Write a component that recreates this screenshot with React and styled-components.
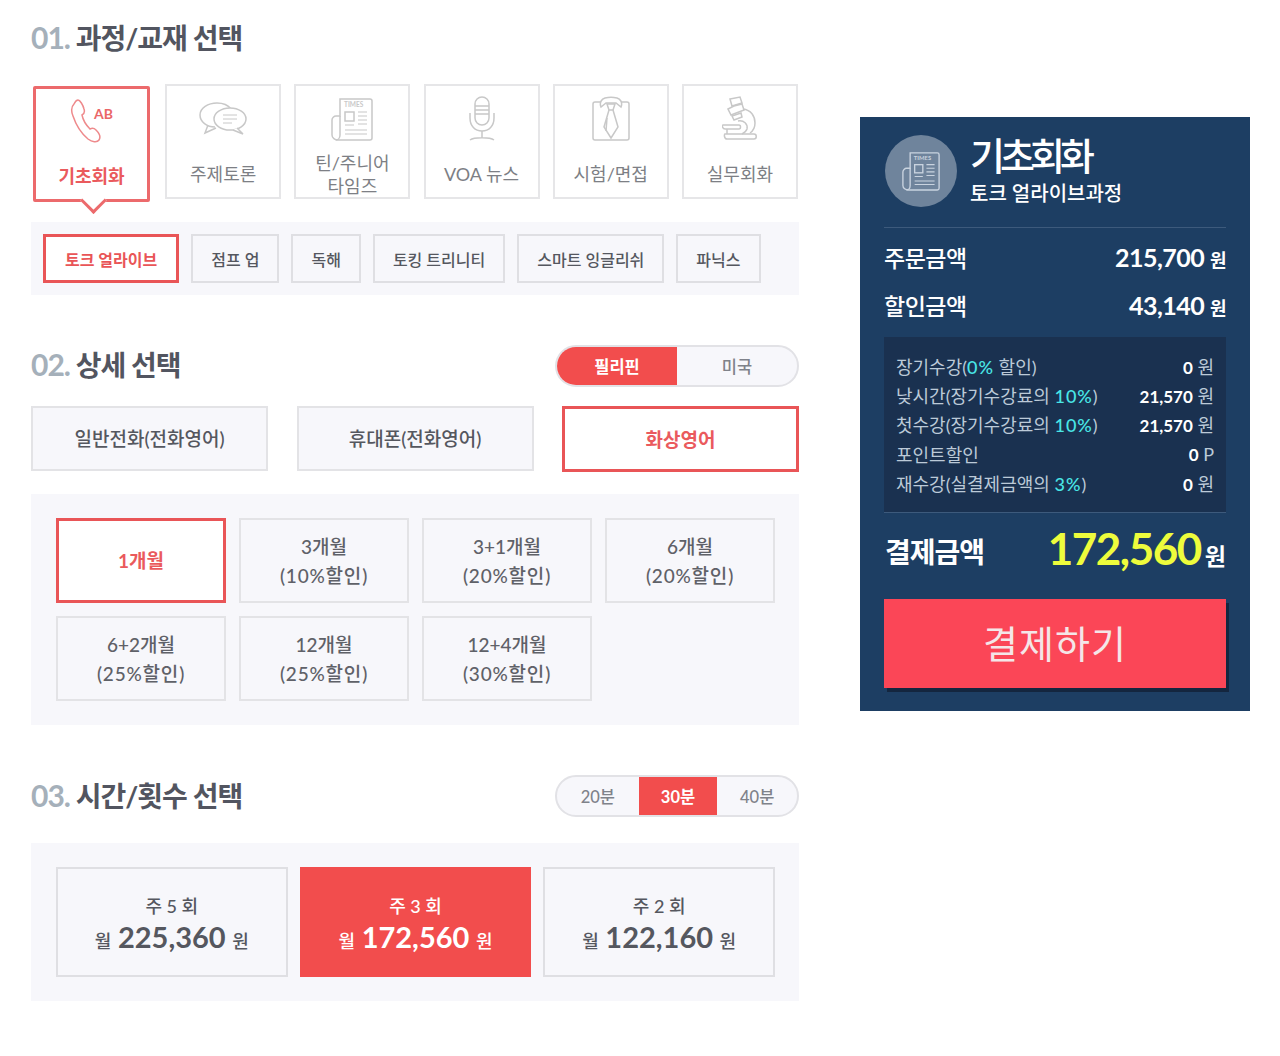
import React from "react";
import styled, { createGlobalStyle, css } from "styled-components";

const RED = "#f24d4d";
const FONT = `Lato, "Noto Sans CJK KR", sans-serif`;

const GlobalStyle = createGlobalStyle`
  html, body { margin: 0; padding: 0; background: #fff; }
  body { font-family: ${FONT}; color: #4a4d57; }
  * { box-sizing: border-box; }
`;

const PhoneIcon = ({ color }) => (
  <svg width="46" height="48" viewBox="0 0 46 48" fill="none" stroke={color} strokeWidth="1.5">
    <path d="M5 7 C2 10 2 14 4 19 C7 28 13 37 19 42 C23 45 28 46 30 43 C32 40 30 36 27 33 C25 31 23 31 21 32 C18 29 14 23 13 18 C15 17 16 15 15 12 C14 8 11 3 9 3 C7 3 6 5 5 7 Z" />
    <text x="25" y="22" fontSize="14" fontWeight="700" fill="#ea6668" stroke="none" fontFamily="Lato, sans-serif">AB</text>
  </svg>
);

const ChatIcon = ({ color }) => (
  <svg width="48" height="36" viewBox="0 0 48 36" fill="none" stroke={color} strokeWidth="1.5">
    <path d="M16 26 C8 26 1 21 1 14 C1 7 9 2 18 2 C24 2 29 4 32 8" />
    <path d="M9 24 L6 32 L17 27" />
    <ellipse cx="31" cy="18" rx="16" ry="11" fill="#fff" />
    <path d="M38 27 L44 33 L34 29" fill="#fff" />
    <path d="M24 14 H38 M24 18 H38 M24 22 H33" strokeWidth="1" />
  </svg>
);

const PaperIcon = ({ color, width = 42, height = 44, fill = "none" }) => (
  <svg width={width} height={height} viewBox="0 0 42 44" fill={fill} stroke={color} strokeWidth="1.5">
    <path d="M9 2 H39 C40 2 41 3 41 4 V41 C41 42 40 43 39 43 H7 C4 43 1 41 1 38 V23 C1 21 3 19 5 19 H9 Z" />
    <path d="M9 19 V38 C9 41 7 43 5 43" />
    <text x="13" y="10" fontSize="6.5" fontWeight="700" fill={color} stroke="none" fontFamily="Lato, sans-serif">TIMES</text>
    <rect x="14" y="15" width="9" height="9" />
    <path d="M27 15 H36 M27 19 H36 M27 23 H36 M27 27 H36 M14 28 H23 M14 33 H36 M14 37 H36" strokeWidth="1.2" />
  </svg>
);

const MicIcon = ({ color }) => (
  <svg width="28" height="46" viewBox="0 0 28 46" fill="none" stroke={color} strokeWidth="1.5">
    <rect x="7" y="1" width="14" height="28" rx="7" />
    <path d="M7 10 H21 M7 14 H21 M7 18 H21" strokeWidth="1.6" />
    <path d="M2 17 V22 C2 30 7 35 14 35 C21 35 26 30 26 22 V17" />
    <path d="M14 35 V42 M2 44 C6 41 22 41 26 44" />
  </svg>
);

const ShirtIcon = ({ color }) => (
  <svg width="38" height="46" viewBox="0 0 38 46" fill="none" stroke={color} strokeWidth="1.5">
    <path d="M9 6 H3 C2 6 1 7 1 8 V42 C1 43 2 44 3 44 H35 C36 44 37 43 37 42 V8 C37 7 36 6 35 6 H29" />
    <path d="M9 11 C7 6 10 3 13 2 C17 1 21 1 25 2 C28 3 31 6 29 11 L24 7 H14 Z" />
    <path d="M15 8 H23 L21 14 H17 Z" />
    <path d="M17 14 L12 31 L19 42 L26 31 L21 14" />
    <path d="M15 22 L14 35" />
  </svg>
);

const ScopeIcon = ({ color }) => (
  <svg width="36" height="46" viewBox="0 0 36 46" fill="none" stroke={color} strokeWidth="1.5">
    <path d="M8 3 L18 1 L20 7 L10 10 Z" />
    <path d="M6 13 L12 10 L20 8 L22 14 L9 19 Z" />
    <path d="M10 20 L19 17 L20 21 L12 24 Z" />
    <path d="M21 13 C29 14 33 20 33 27 C33 32 31 35 28 37" />
    <path d="M16 25 C22 24 26 28 25 33 C24 36 22 37 20 38" />
    <path d="M1 29 H17 C19 29 19 33 17 33 H3 C0 33 0 29 1 29 Z" />
    <path d="M5 33 V38 M3 38 H32 C35 38 35 43 32 43 H5 C2 43 2 38 3 38 Z" />
  </svg>
);

const COURSES = [
  { label: "기초회화", Icon: PhoneIcon, active: true },
  { label: "주제토론", Icon: ChatIcon },
  { label: "틴/주니어\n타임즈", Icon: PaperIcon },
  { label: "VOA 뉴스", Icon: MicIcon },
  { label: "시험/면접", Icon: ShirtIcon },
  { label: "실무회화", Icon: ScopeIcon },
];

const TEXTBOOKS = ["토크 얼라이브", "점프 업", "독해", "토킹 트리니티", "스마트 잉글리쉬", "파닉스"];
const LINES = ["일반전화(전화영어)", "휴대폰(전화영어)", "화상영어"];
const TERMS = [
  ["1개월"],
  ["3개월", "(10%할인)"],
  ["3+1개월", "(20%할인)"],
  ["6개월", "(20%할인)"],
  ["6+2개월", "(25%할인)"],
  ["12개월", "(25%할인)"],
  ["12+4개월", "(30%할인)"],
];
const PLANS = [
  { times: "주 5 회", price: "225,360" },
  { times: "주 3 회", price: "172,560", active: true },
  { times: "주 2 회", price: "122,160" },
];

const DISCOUNTS = [
  { label: "장기수강(", rate: "0%", rest: " 할인)", value: "0", unit: "원" },
  { label: "낮시간(장기수강료의 ", rate: "10%", rest: ")", value: "21,570", unit: "원" },
  { label: "첫수강(장기수강료의 ", rate: "10%", rest: ")", value: "21,570", unit: "원" },
  { label: "포인트할인", value: "0", unit: "P" },
  { label: "재수강(실결제금액의 ", rate: "3%", rest: ")", value: "0", unit: " 원" },
];

export default function App() {
  return (
    <Page>
      <GlobalStyle />
      <Main>
        <TitleRow $height={76} $pad={18}>
          <Title><em>01.</em> 과정/교재 선택</Title>
        </TitleRow>
        <CourseRow>
          {COURSES.map(({ label, Icon, active }) => (
            <CourseCard key={label} $active={active}>
              <IconSlot $active={active}>
                <Icon color={active ? "#ee8a8c" : "#c8c8c8"} />
              </IconSlot>
              <CourseLabel $active={active}>{label}</CourseLabel>
            </CourseCard>
          ))}
        </CourseRow>
        <BookBand>
          {TEXTBOOKS.map((book, i) => (
            <BookButton key={book} $active={i === 0}>{book}</BookButton>
          ))}
        </BookBand>

        <TitleRow $height={61} $top={50}>
          <Title><em>02.</em> 상세 선택</Title>
          <Switch>
            <SwitchItem $width={122} $active>필리핀</SwitchItem>
            <SwitchItem $width={122}>미국</SwitchItem>
          </Switch>
        </TitleRow>
        <LineRow>
          {LINES.map((line, i) => (
            <LineButton key={line} $active={i === 2}>{line}</LineButton>
          ))}
        </LineRow>
        <TermBand>
          {TERMS.map((term, i) => (
            <TermCard key={term[0]} $active={i === 0}>
              <div>{term[0]}</div>
              {term[1] && <TermRate>{term[1]}</TermRate>}
            </TermCard>
          ))}
        </TermBand>

        <TitleRow $height={68} $top={50} $pad={1}>
          <Title><em>03.</em> 시간/횟수 선택</Title>
          <Switch $up={1}>
            <SwitchItem $width={83}>20분</SwitchItem>
            <SwitchItem $width={80} $active>30분</SwitchItem>
            <SwitchItem $width={81}>40분</SwitchItem>
          </Switch>
        </TitleRow>
        <PlanBand>
          {PLANS.map((plan) => (
            <PlanCard key={plan.times} $active={plan.active}>
              <PlanTimes>{plan.times}</PlanTimes>
              <PlanPrice>월 <strong>{plan.price}</strong> 원</PlanPrice>
            </PlanCard>
          ))}
        </PlanBand>
      </Main>

      <Summary>
        <SummaryHead>
          <Badge><PaperIcon color="#c9d3df" width={38} height={40} /></Badge>
          <div>
            <SummaryTitle>기초회화</SummaryTitle>
            <SummarySub>토크 얼라이브과정</SummarySub>
          </div>
        </SummaryHead>
        <AmountList>
          <AmountRow>
            <span>주문금액</span>
            <AmountValue>215,700 <small>원</small></AmountValue>
          </AmountRow>
          <AmountRow>
            <span>할인금액</span>
            <AmountValue>43,140 <small>원</small></AmountValue>
          </AmountRow>
        </AmountList>
        <DiscountBox>
          {DISCOUNTS.map((d) => (
            <DiscountRow key={d.label}>
              <span>{d.label}{d.rate && <Rate>{d.rate}</Rate>}{d.rest}</span>
              <span><b>{d.value}</b> {d.unit}</span>
            </DiscountRow>
          ))}
        </DiscountBox>
        <TotalRow>
          <TotalLabel>결제금액</TotalLabel>
          <TotalValue><strong>172,560</strong> <small>원</small></TotalValue>
        </TotalRow>
        <PayButton>결제하기</PayButton>
      </Summary>
    </Page>
  );
}

const Page = styled.div`
  width: 1280px;
  height: 1056px;
  display: flex;
  align-items: flex-start;
  padding-left: 31px;
  overflow: hidden;
`;

const Main = styled.div`
  width: 768px;
  flex: none;
  display: flex;
  flex-direction: column;
`;

const TitleRow = styled.div`
  height: ${(p) => p.$height}px;
  margin-top: ${(p) => p.$top || 0}px;
  padding-top: ${(p) => p.$pad || 0}px;
  display: flex;
  justify-content: space-between;
  align-items: flex-start;
`;

const Title = styled.h2`
  margin: -1px 0 0;
  font-size: 28px;
  line-height: 40px;
  font-weight: 700;
  letter-spacing: -1px;
  color: #525560;
  em {
    font-style: normal;
    font-weight: 700;
    color: #a5b0ba;
    font-size: 30px;
  }
`;

const CourseRow = styled.div`
  display: flex;
  gap: 13.2px;
  height: 138px;
  margin-top: 8px;
`;

const CourseCard = styled.div`
  position: relative;
  flex: none;
  width: 116px;
  height: 115px;
  border: 2px solid #e6e6e8;
  background: #fff;
  display: flex;
  flex-direction: column;
  align-items: center;
  ${(p) => p.$active && css`
    width: 117px;
    height: 116px;
    margin: 2px 2px 0 2px;
    border: 3px solid #ec6a6c;
    border-radius: 2px;
    &::after {
      content: "";
      position: absolute;
      left: 50%;
      bottom: -11px;
      width: 16px;
      height: 16px;
      margin-left: -8px;
      background: #fff;
      border-right: 3px solid #ec6a6c;
      border-bottom: 3px solid #ec6a6c;
      transform: rotate(45deg);
    }
  `}
`;

const IconSlot = styled.div`
  height: ${(p) => (p.$active ? 64 : 66)}px;
  flex: none;
  display: flex;
  align-items: center;
  justify-content: center;
`;

const CourseLabel = styled.div`
  flex: 1;
  display: flex;
  align-items: center;
  text-align: center;
  white-space: pre-line;
  font-size: 18px;
  line-height: 23px;
  color: ${(p) => (p.$active ? "#ea5a5d" : "#7d7f85")};
  font-weight: ${(p) => (p.$active ? 700 : 400)};
`;

const Band = styled.div`
  background: #f7f7fb;
`;

const BookBand = styled(Band)`
  height: 73px;
  padding: 12px;
  display: flex;
  gap: 12px;
`;

const BookButton = styled.div`
  height: 49px;
  padding: 0 18px;
  display: flex;
  align-items: center;
  font-size: 16px;
  border: 2px solid #dfdfe3;
  color: #55575f;
  font-weight: 500;
  ${(p) => p.$active && css`
    padding: 0 19px;
    border: 3px solid #e95557;
    background: #fff;
    color: #e95557;
    font-weight: 700;
  `}
`;

const Switch = styled.div`
  width: 244px;
  height: 42px;
  display: flex;
  border: 2px solid #e2e2e6;
  border-radius: 21px;
  background: #f7f7fb;
  overflow: hidden;
  margin-top: ${(p) => (p.$up ? -p.$up : 0)}px;
`;

const SwitchItem = styled.div`
  width: ${(p) => p.$width}px;
  display: flex;
  align-items: center;
  justify-content: center;
  padding-bottom: 1px;
  font-size: 16.5px;
  color: #7f828a;
  font-weight: 500;
  ${(p) => p.$active && css`
    background: ${RED};
    color: #fff;
    font-weight: 700;
  `}
`;

const LineRow = styled.div`
  display: flex;
  justify-content: space-between;
  height: 88px;
`;

const LineButton = styled.div`
  width: 237px;
  height: 65px;
  padding-bottom: 2px;
  background: #f7f7fb;
  border: 2px solid #e3e3e6;
  display: flex;
  align-items: center;
  justify-content: center;
  font-size: 19px;
  font-weight: 500;
  color: #55575f;
  ${(p) => p.$active && css`
    height: 66px;
    background: #fff;
    border: 3px solid #e95557;
    color: #ea5a5d;
    font-weight: 700;
  `}
`;

const TermBand = styled(Band)`
  height: 231px;
  padding: 24px 24px 0 25px;
  display: grid;
  grid-template-columns: repeat(4, 170px);
  grid-auto-rows: 85px;
  gap: 13px;
`;

const TermCard = styled.div`
  border: 2px solid #e3e3e6;
  display: flex;
  flex-direction: column;
  justify-content: center;
  align-items: center;
  font-size: 19px;
  line-height: 29px;
  font-weight: 500;
  color: #5f6168;
  ${(p) => p.$active && css`
    border: 3px solid #e95557;
    background: #fff;
    color: #ea5a5d;
    font-weight: 700;
  `}
`;

const TermRate = styled.div`
  letter-spacing: 0.8px;
`;

const PlanBand = styled(Band)`
  height: 158px;
  padding: 24px 24px 0 25px;
  display: flex;
  gap: 12px;
`;

const PlanCard = styled.div`
  width: 232px;
  height: 110px;
  padding-top: 7px;
  border: 2px solid #dfdfe3;
  display: flex;
  flex-direction: column;
  align-items: center;
  justify-content: center;
  color: #55575f;
  ${(p) => p.$active && css`
    background: ${RED};
    border-color: ${RED};
    color: #fff;
  `}
`;

const PlanTimes = styled.div`
  font-size: 18px;
  line-height: 26px;
  font-weight: 500;
`;

const PlanPrice = styled.div`
  font-size: 18px;
  line-height: 36px;
  font-weight: 500;
  strong {
    font-size: 29px;
    font-weight: 700;
    margin: 0 2px;
  }
`;

const Summary = styled.aside`
  width: 390px;
  height: 594px;
  flex: none;
  margin: 117px 0 0 61px;
  padding: 17px 24px 0;
  background: #1d3e63;
  color: #fff;
`;

const SummaryHead = styled.div`
  display: flex;
  gap: 14px;
  height: 94px;
  padding-top: 1px;
  border-bottom: 1px solid #3d5a7c;
`;

const Badge = styled.div`
  width: 72px;
  height: 72px;
  flex: none;
  margin-left: 1px;
  border-radius: 50%;
  background: #6f849c;
  display: flex;
  align-items: center;
  justify-content: center;
`;

const SummaryTitle = styled.div`
  font-size: 38px;
  line-height: 40px;
  font-weight: 500;
  letter-spacing: -5px;
  margin-left: -1px;
`;

const SummarySub = styled.div`
  font-size: 20px;
  line-height: 28px;
  font-weight: 500;
  margin: 4px 0 0 -1px;
`;

const AmountList = styled.div`
  padding-top: 5px;
`;

const AmountRow = styled.div`
  height: 48px;
  display: flex;
  justify-content: space-between;
  align-items: center;
  font-size: 23px;
  font-weight: 500;
  letter-spacing: -0.5px;
`;

const AmountValue = styled.span`
  font-size: 25px;
  font-weight: 700;
  small {
    font-size: 18px;
  }
`;

const DiscountBox = styled.div`
  height: 176px;
  margin-top: 8px;
  padding: 14px 12px 0;
  background: #1a3150;
  border-bottom: 1px solid #3d5a7c;
`;

const DiscountRow = styled.div`
  height: 29.3px;
  display: flex;
  justify-content: space-between;
  align-items: center;
  font-size: 18px;
  color: #bccad8;
  b {
    font-size: 17px;
    font-weight: 700;
    color: #fff;
  }
`;

const Rate = styled.span`
  color: #49e6e6;
  font-weight: 500;
  letter-spacing: 1px;
`;

const TotalRow = styled.div`
  height: 86px;
  padding-bottom: 10px;
  display: flex;
  justify-content: space-between;
  align-items: center;
`;

const TotalLabel = styled.div`
  font-size: 28px;
  font-weight: 700;
  letter-spacing: -1px;
  margin-left: 1px;
`;

const TotalValue = styled.div`
  padding-bottom: 6px;
  strong {
    font-size: 44px;
    font-weight: 700;
    color: #eefc3c;
    letter-spacing: -1.5px;
  }
  small {
    font-size: 23px;
    font-weight: 700;
  }
`;

const PayButton = styled.div`
  height: 89px;
  padding-bottom: 4px;
  background: #fb4657;
  box-shadow: 3px 4px 0 #14263f;
  display: flex;
  align-items: center;
  justify-content: center;
  font-size: 38px;
  letter-spacing: 1px;
  color: #f4e6e8;
`;
